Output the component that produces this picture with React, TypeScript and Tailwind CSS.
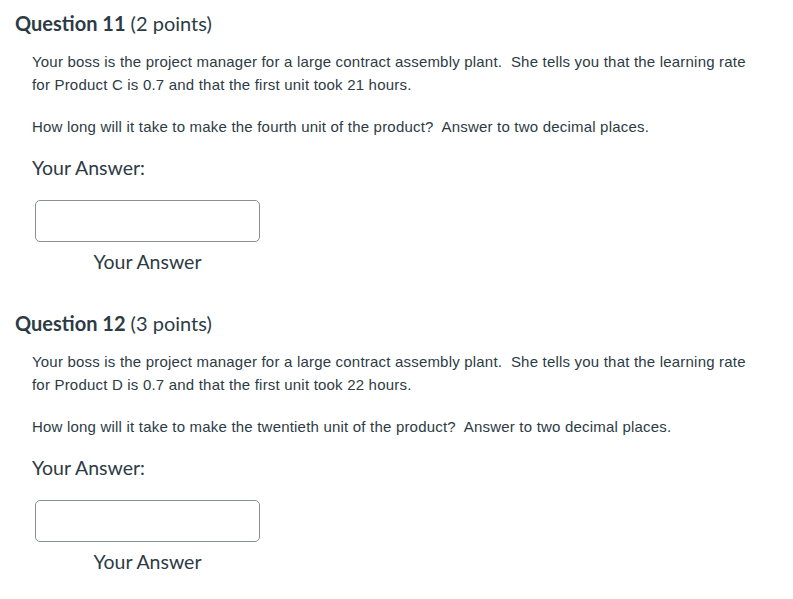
import React from 'react';

const QUESTIONS = [
  {
    num: 11,
    points: 2,
    line1: 'Your boss is the project manager for a large contract assembly plant.  She tells you that the learning rate',
    line2: 'for Product C is 0.7 and that the first unit took 21 hours.',
    ask: 'How long will it take to make the fourth unit of the product?  Answer to two decimal places.',
  },
  {
    num: 12,
    points: 3,
    line1: 'Your boss is the project manager for a large contract assembly plant.  She tells you that the learning rate',
    line2: 'for Product D is 0.7 and that the first unit took 22 hours.',
    ask: 'How long will it take to make the twentieth unit of the product?  Answer to two decimal places.',
  },
];

function Question({ q }: { q: (typeof QUESTIONS)[number] }) {
  return (
    <div className="flex flex-col">
      <h2 className="pl-[15px] text-[20px] leading-[28px] text-[#2d3b45] font-['Lato',sans-serif]">
        <span className="font-bold">Question {q.num}</span> ({q.points} points)
      </h2>
      <div className="pl-[32px] mt-[13px] text-[15px] leading-[23px] tracking-[0.2px] text-[#2d3b45] font-['Liberation_Sans',Arial,sans-serif] whitespace-pre">
        <p>
          {q.line1}
          <br />
          {q.line2}
        </p>
        <p className="mt-[19px]">{q.ask}</p>
      </div>
      <div className="pl-[32px] mt-[18px] text-[19.5px] leading-[24px] text-[#2d3b45] font-['Lato',sans-serif]">
        Your Answer:
      </div>
      <div className="pl-[35px] mt-[20px] flex flex-col w-fit">
        <input
          type="text"
          aria-label="Your Answer"
          className="w-[225px] h-[42px] rounded-[5px] border border-[#8a8f94] bg-white outline-none"
        />
        <label className="mt-[8px] text-center text-[19.5px] leading-[24px] text-[#2d3b45] font-['Lato',sans-serif]">
          Your Answer
        </label>
      </div>
    </div>
  );
}

export default function App() {
  return (
    <div className="w-[793px] h-[599px] bg-white pt-[9px] flex flex-col gap-[35px] overflow-hidden">
      {QUESTIONS.map((q) => (
        <Question key={q.num} q={q} />
      ))}
    </div>
  );
}
